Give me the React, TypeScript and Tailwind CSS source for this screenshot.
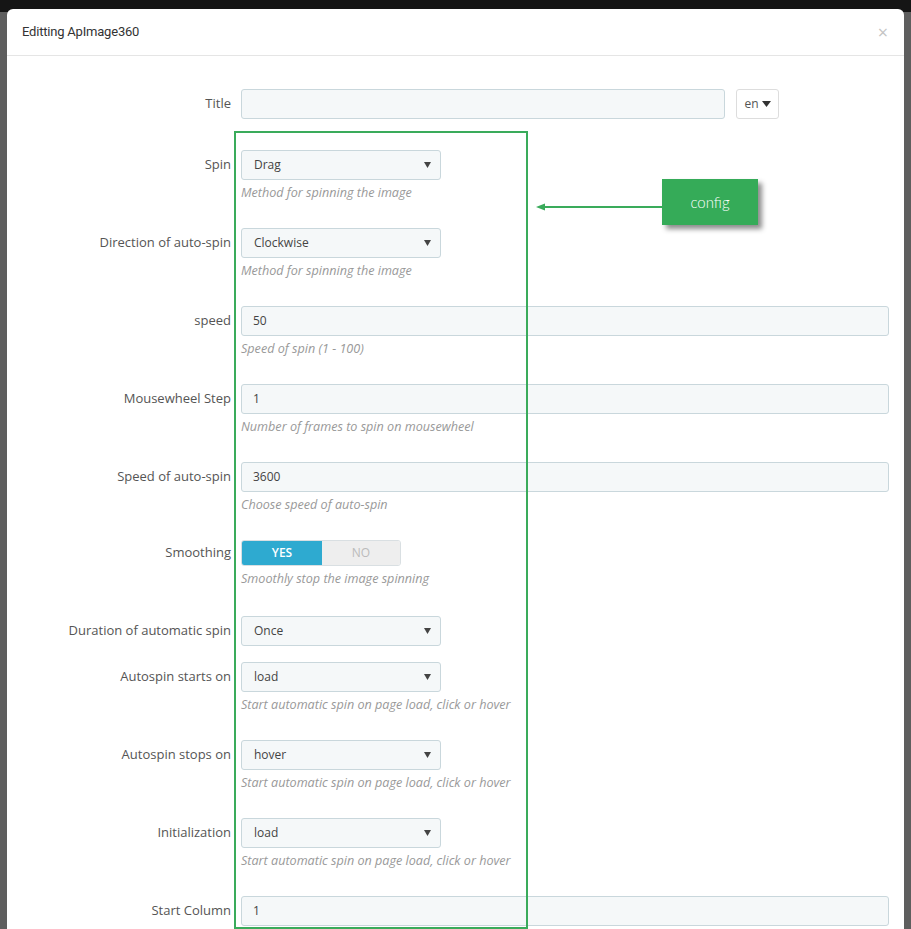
import React from 'react';

const Caret = () => (
  <svg width="7" height="6" viewBox="0 0 7 6" className="shrink-0">
    <path d="M0 0 L7 0 L3.5 6 Z" fill="#444" />
  </svg>
);

function Label({ text }: { text: string }) {
  return (
    <div className="w-[209px] shrink-0 h-[30px] flex items-center justify-end text-[13px] text-[#555]">
      {text}
    </div>
  );
}

function Help({ text }: { text: string }) {
  return <div className="mt-[4px] h-[18px] leading-[18px] text-[12.6px] italic text-[#999]">{text}</div>;
}

function SelectBox({ value }: { value: string }) {
  return (
    <div className="w-[200px] h-[30px] rounded-[3px] border border-[#c9d7dc] bg-[#f5f8f9] flex items-center justify-between pl-[12px] pr-[9px] text-[12px] text-[#444]">
      <span>{value}</span>
      <Caret />
    </div>
  );
}

function TextBox({ value }: { value: string }) {
  return (
    <div className="flex-1 h-[30px] rounded-[3px] border border-[#c9d7dc] bg-[#f5f8f9] flex items-center pl-[11px] text-[12px] text-[#444]">
      {value}
    </div>
  );
}

type Row = {
  label: string;
  kind: 'select' | 'text' | 'toggle';
  value?: string;
  help?: string;
};

const rows: Row[] = [
  { label: 'Spin', kind: 'select', value: 'Drag', help: 'Method for spinning the image' },
  { label: 'Direction of auto-spin', kind: 'select', value: 'Clockwise', help: 'Method for spinning the image' },
  { label: 'speed', kind: 'text', value: '50', help: 'Speed of spin (1 - 100)' },
  { label: 'Mousewheel Step', kind: 'text', value: '1', help: 'Number of frames to spin on mousewheel' },
  { label: 'Speed of auto-spin', kind: 'text', value: '3600', help: 'Choose speed of auto-spin' },
  { label: 'Smoothing', kind: 'toggle', help: 'Smoothly stop the image spinning' },
  { label: 'Duration of automatic spin', kind: 'select', value: 'Once' },
  { label: 'Autospin starts on', kind: 'select', value: 'load', help: 'Start automatic spin on page load, click or hover' },
  { label: 'Autospin stops on', kind: 'select', value: 'hover', help: 'Start automatic spin on page load, click or hover' },
  { label: 'Initialization', kind: 'select', value: 'load', help: 'Start automatic spin on page load, click or hover' },
  { label: 'Start Column', kind: 'text', value: '1' },
];

function FormRow({ row }: { row: Row }) {
  const mb = row.help ? (row.kind === 'toggle' ? 'mb-[28px]' : 'mb-[26px]') : 'mb-[16px]';
  return (
    <div className={`flex gap-[10px] ${mb} ${row.kind === 'toggle' ? 'mt-[3px]' : ''}`}>
      {row.kind === 'toggle' ? (
        <div className="w-[209px] shrink-0 h-[26px] flex items-center justify-end text-[13px] text-[#555]">{row.label}</div>
      ) : (
        <Label text={row.label} />
      )}
      <div className="flex-1 flex flex-col">
        {row.kind === 'select' && <SelectBox value={row.value!} />}
        {row.kind === 'text' && (
          <div className="flex">
            <TextBox value={row.value!} />
          </div>
        )}
        {row.kind === 'toggle' && (
          <div className="flex w-[160px] h-[26px] rounded-[3px] overflow-hidden border border-[#d9dfe2]">
            <div className="w-[80px] bg-[#2eaad0] text-white text-[12px] font-semibold flex items-center justify-center">YES</div>
            <div className="flex-1 bg-[#eeeeee] text-[#bbbbbb] text-[12px] flex items-center justify-center">NO</div>
          </div>
        )}
        {row.help && <Help text={row.help} />}
      </div>
    </div>
  );
}

export default function App() {
  return (
    <div className="relative h-[929px] overflow-hidden bg-[#5e5e5e] font-['Open_Sans',sans-serif]">
      <div className="h-[12px] bg-[#151515]" />
      <div className="-mt-[3px] mx-[7px] h-[940px] bg-white rounded-t-[6px]">
        <div className="h-[47px] border-b border-[#e5e5e5] flex items-center justify-between pl-[15px] pr-[16px]">
          <span className="font-['Roboto',sans-serif] text-[13px] text-[#333] tracking-[-0.2px]">Editting ApImage360</span>
          <span className="text-[18px] leading-none text-[#c4c4c4]">×</span>
        </div>
        <div className="pt-[33px] px-[15px]">
          <div className="flex gap-[10px] mb-[31px]">
            <Label text="Title" />
            <div className="flex-1 flex gap-[11px]">
              <div className="w-[484px] h-[30px] rounded-[3px] border border-[#c9d7dc] bg-[#f5f8f9]" />
              <div className="w-[43px] h-[30px] rounded-[3px] border border-[#dddddd] bg-white flex items-center justify-center gap-[3px] text-[12px] text-[#555]">
                <span>en</span>
                <svg width="9" height="6" viewBox="0 0 9 6">
                  <path d="M0 0 L9 0 L4.5 6 Z" fill="#333" />
                </svg>
              </div>
            </div>
          </div>
          {rows.map((r) => (
            <FormRow key={r.label} row={r} />
          ))}
        </div>
      </div>

      {/* annotation overlay */}
      <div className="absolute left-[234px] top-[131px] w-[294px] h-[798px] border-2 border-[#3aab5b]" />
      <svg className="absolute left-[534px] top-[200px]" width="130" height="14" viewBox="0 0 130 14">
        <line x1="8" y1="7" x2="130" y2="7" stroke="#3aab5b" strokeWidth="2" />
        <path d="M2 7 L11 3.5 L11 10.5 Z" fill="#3aab5b" />
      </svg>
      <div className="absolute left-[662px] top-[179px] w-[96px] h-[46px] bg-[#35ab58] shadow-[4px_4px_5px_rgba(0,0,0,0.45)] flex items-center justify-center text-white text-[15px] font-light font-['Lato',sans-serif]">
        config
      </div>
    </div>
  );
}
